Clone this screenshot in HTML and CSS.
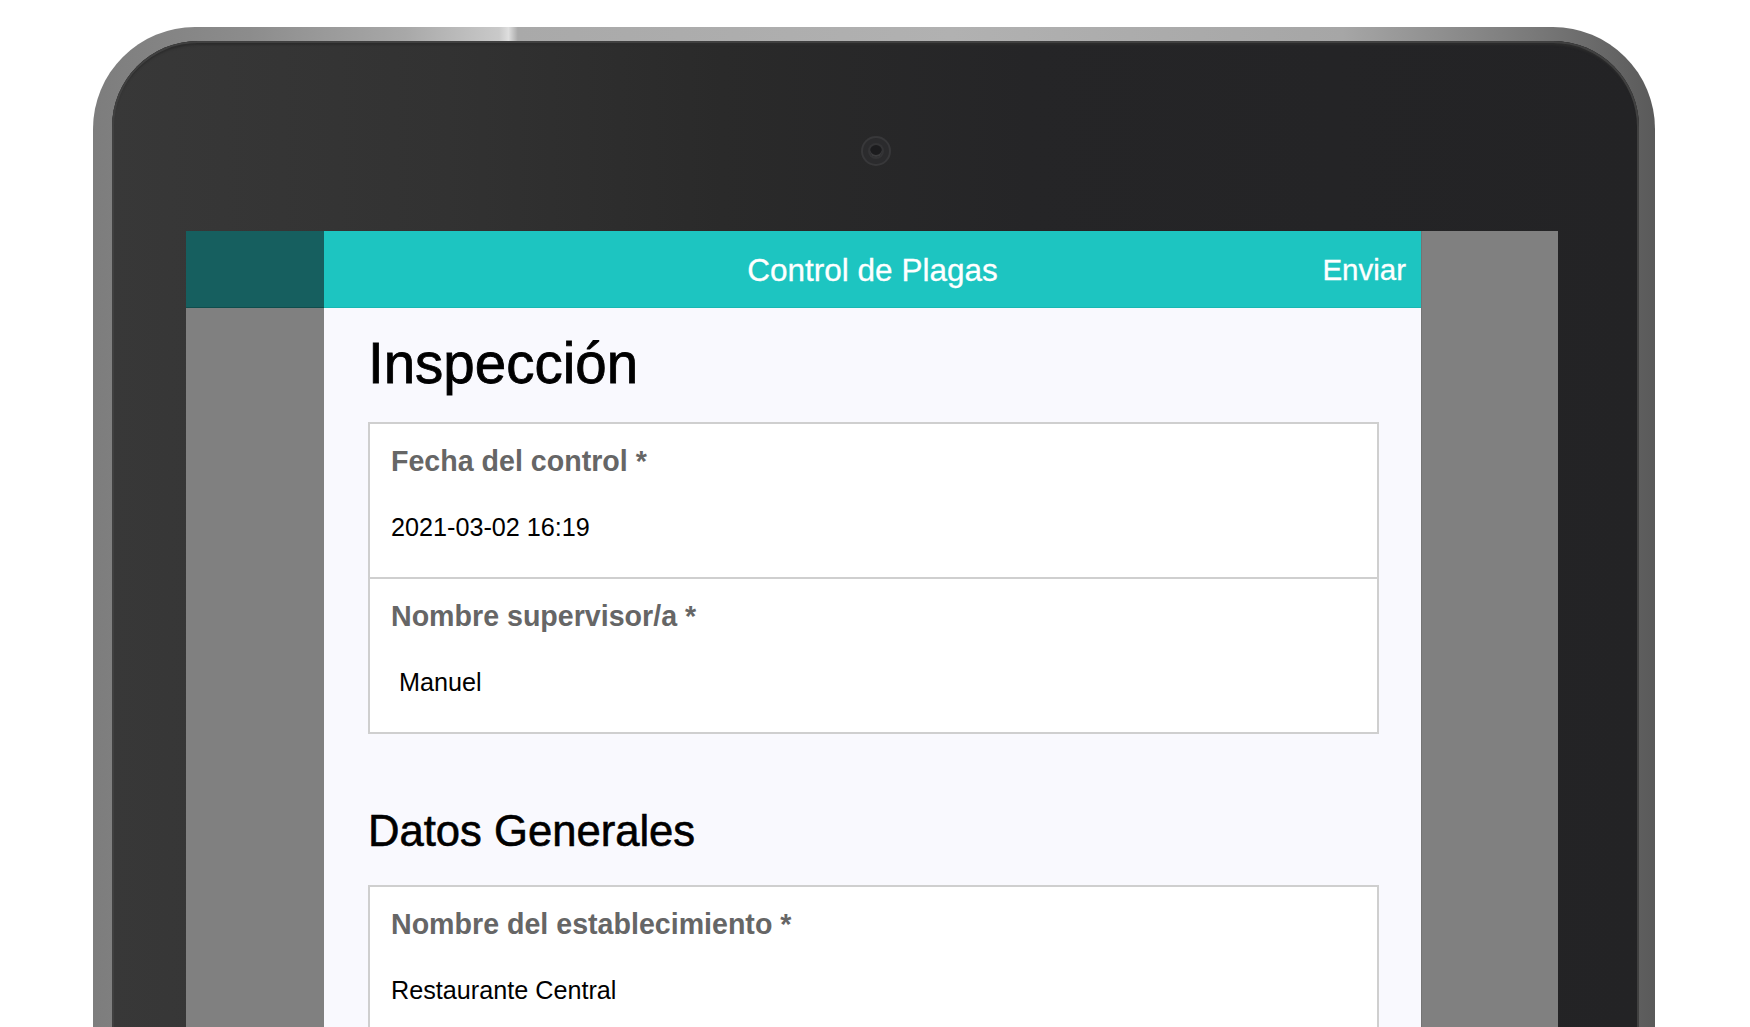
FILE: index.html
```html
<!DOCTYPE html>
<html lang="es">
<head>
<meta charset="utf-8">
<title>Control de Plagas</title>
<link rel="stylesheet" href="styles.css">
</head>
<body>
<div class="device">
  <div class="bezel">
    <div class="camera-bar"><span class="camera"><span class="lens"></span></span></div>
    <div class="screen">
      <div class="side side-left"><div class="side-head"></div></div>
      <div class="main">
        <header class="navbar">
          <span class="nav-spacer"></span>
          <h1 class="nav-title">Control de Plagas</h1>
          <a class="nav-action">Enviar</a>
        </header>
        <section class="content">
          <h2 class="page-title">Inspección</h2>
          <div class="card">
            <div class="field">
              <div class="label">Fecha del control *</div>
              <div class="value">2021-03-02 16:19</div>
            </div>
            <div class="field">
              <div class="label">Nombre supervisor/a *</div>
              <div class="value value-indent">Manuel</div>
            </div>
          </div>
          <h2 class="section-title">Datos Generales</h2>
          <div class="card">
            <div class="field">
              <div class="label">Nombre del establecimiento *</div>
              <div class="value">Restaurante Central</div>
            </div>
          </div>
        </section>
      </div>
      <div class="side side-right"></div>
    </div>
  </div>
</div>
</body>
</html>
```
FILE: styles.css
```css
html, body {
  margin: 0;
  padding: 0;
  background: #ffffff;
  height: 1027px;
  overflow: hidden;
  font-family: "Liberation Sans", Arial, Helvetica, sans-serif;
}

.device {
  margin: 27px 0 0 93px;
  width: 1562px;
  height: 1200px;
  box-sizing: border-box;
  padding: 14px 16px 0 19px;
  border-radius: 102px 102px 0 0;
  background: linear-gradient(to right, #7d7d7d 0%, #8c8c8c 10%, #a8a8a8 20%, #c9c9c9 26%, #dedede 26.6%, #a9a9a9 27.2%, #b1b1b1 55%, #a6a6a6 80%, #7a7a7a 92%, #5a5a5a 100%);
}

.bezel {
  height: 100%;
  box-sizing: border-box;
  padding: 0 81px 0 74px;
  border-radius: 86px 86px 0 0;
  background: linear-gradient(to right, #383838 0%, #323232 22%, #2a2a2a 40%, #252527 60%, #232325 100%);
  box-shadow: inset 0 0 0 2px #404040, inset 0 4px 2px #2c2c2c;
}

.camera-bar {
  height: 190px;
  box-sizing: border-box;
  padding-top: 97px;
  display: flex;
  justify-content: center;
}

.camera {
  width: 26px;
  height: 26px;
  margin-left: 8px;
  border-radius: 50%;
  background: #2b2b2d;
  box-shadow: 0 0 0 2px #38383a;
  display: flex;
  align-items: center;
  justify-content: center;
}

.lens {
  width: 12px;
  height: 12px;
  border-radius: 50%;
  background: #1c1c1e;
  box-shadow: 0 0 0 2px #343436, inset 0 -2px 0 #3c3c3e;
}

.screen {
  display: grid;
  grid-template-columns: 138px 1097px 137px;
  min-height: 830px;
}

.side {
  background: #808080;
}

.side-head {
  height: 77px;
  background: #165f5f;
  box-shadow: inset 0 -1px 0 #0f4d4d;
}

.side-right {
  box-shadow: inset 1px 0 0 #747474;
}

.main {
  background: #f9f9fe;
}

.navbar {
  height: 77px;
  background: #1dc5c1;
  box-shadow: inset 0 -1px 0 #19b7b3;
  display: grid;
  grid-template-columns: 1fr auto 1fr;
  align-items: center;
  color: #ffffff;
}

.nav-title {
  margin: 0;
  font-size: 31.5px;
  font-weight: normal;
  line-height: 34px;
  -webkit-text-stroke: 0.3px #ffffff;
}

.nav-action {
  justify-self: end;
  padding-right: 15px;
  font-size: 29.5px;
  line-height: 34px;
  -webkit-text-stroke: 0.3px #ffffff;
}

.content {
  padding: 0 42px 40px 44px;
}

.page-title {
  margin: 28px 0 31px;
  font-size: 56.5px;
  line-height: 55px;
  font-weight: normal;
  color: #000000;
  -webkit-text-stroke: 0.8px #000000;
}

.section-title {
  margin: 76px 0 32px;
  font-size: 43.6px;
  line-height: 43px;
  font-weight: normal;
  color: #000000;
  -webkit-text-stroke: 0.6px #000000;
}

.card {
  background: #ffffff;
  border: 2px solid #cfcfcf;
}

.field {
  padding: 24px 21px 37px;
}

.field + .field {
  border-top: 2px solid #cfcfcf;
}

.label {
  font-size: 28.6px;
  line-height: 27px;
  font-weight: bold;
  color: #666666;
}

.value {
  margin-top: 40px;
  font-size: 25.2px;
  line-height: 25px;
  color: #000000;
}

.value-indent {
  padding-left: 8px;
}
```
